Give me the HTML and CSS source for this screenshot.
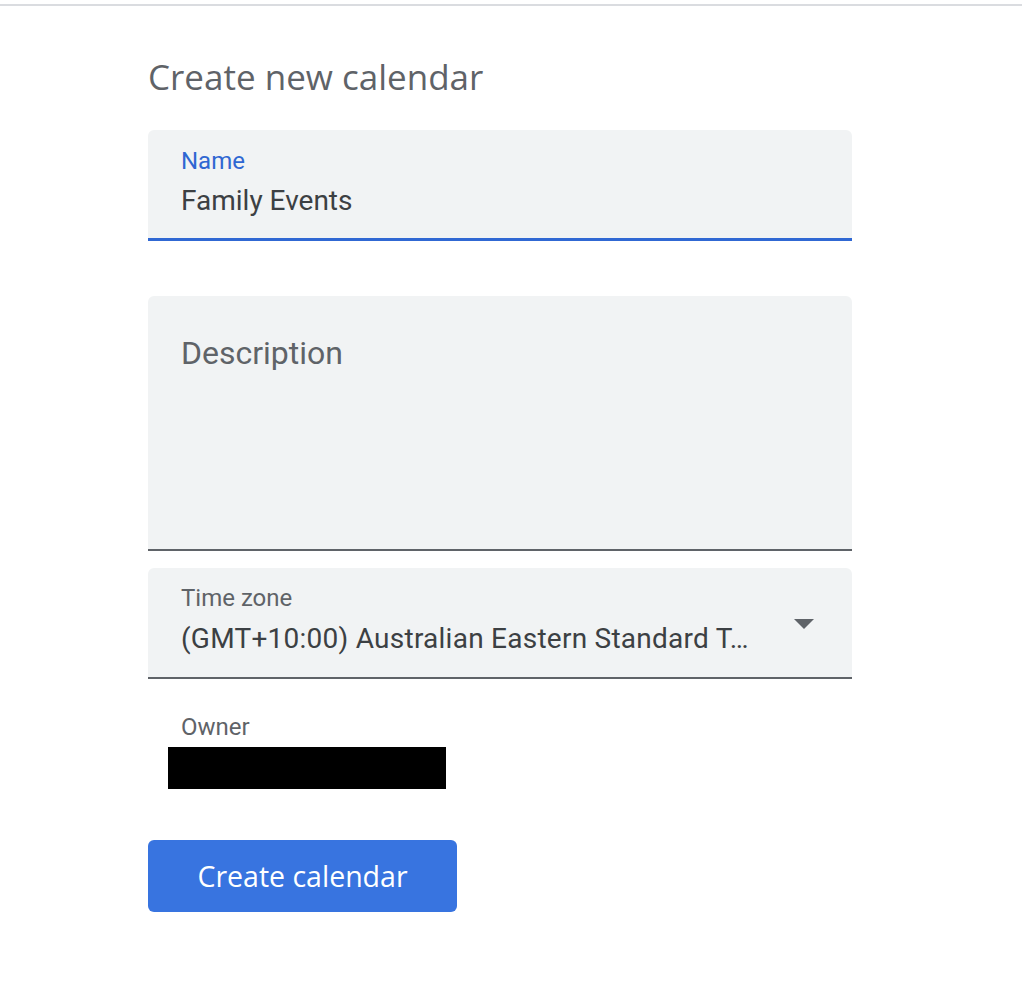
FILE: index.html
```html
<!DOCTYPE html>
<html lang="en">
<head>
<meta charset="utf-8">
<title>Create new calendar</title>
<link rel="stylesheet" href="styles.css">
</head>
<body>
<div class="topline"></div>
<main class="page">
  <h1 class="title">Create new calendar</h1>

  <div class="field field-name">
    <div class="label label-active">Name</div>
    <div class="value">Family Events</div>
  </div>

  <div class="field field-desc">
    <div class="placeholder">Description</div>
  </div>

  <div class="field field-tz">
    <div class="tz-text">
      <div class="label">Time zone</div>
      <div class="value value-tz">(GMT+10:00) Australian Eastern Standard T…</div>
    </div>
    <svg class="caret" width="20" height="10" viewBox="0 0 20 10"><path d="M0 0 L20 0 L10 10 Z" fill="#5f6368"/></svg>
  </div>

  <div class="owner">
    <div class="label">Owner</div>
    <div class="redacted"></div>
  </div>

  <button class="btn">Create calendar</button>
</main>
</body>
</html>
```

FILE: styles.css
```css
html, body {
  margin: 0;
  padding: 0;
  background: #ffffff;
}

body {
  font-family: Roboto, "Liberation Sans", sans-serif;
}

.topline {
  margin-top: 4px;
  height: 2px;
  background: #dadce0;
}

.page {
  width: 704px;
  padding-left: 148px;
  display: flex;
  flex-direction: column;
  align-items: flex-start;
}

.title {
  margin: 49px 0 0 0;
  font-family: "Open Sans", sans-serif;
  font-weight: 400;
  font-size: 35px;
  line-height: 44px;
  color: #5f6368;
  letter-spacing: 0;
}

.field {
  box-sizing: border-box;
  width: 704px;
  background: #f1f3f4;
  border-radius: 6px 6px 0 0;
  padding-left: 33px;
}

.field-name {
  margin-top: 31px;
  height: 111px;
  padding-top: 17px;
  border-bottom: 3px solid #3068d3;
}

.label {
  font-size: 24px;
  line-height: 28px;
  color: #5f6368;
}

.label-active {
  color: #2f67d2;
}

.value {
  margin-top: 10px;
  font-size: 28px;
  line-height: 32px;
  color: #3c4043;
  white-space: nowrap;
}

.field-desc {
  margin-top: 55px;
  height: 255px;
  padding-top: 38px;
  border-bottom: 2px solid #5f6368;
}

.placeholder {
  font-size: 32px;
  line-height: 38px;
  color: #5f6368;
}

.field-tz {
  margin-top: 17px;
  height: 111px;
  padding-top: 16px;
  padding-right: 38px;
  border-bottom: 2px solid #5f6368;
  display: flex;
  justify-content: space-between;
  align-items: flex-start;
}

.field-tz .value-tz {
  margin-top: 11px;
  letter-spacing: 0.25px;
}

.caret {
  display: block;
  margin-top: 35px;
}

.owner {
  margin-top: 34px;
  padding-left: 33px;
}

.redacted {
  margin-left: -13px;
  margin-top: 6px;
  width: 278px;
  height: 42px;
  background: #000000;
}

.btn {
  margin-top: 51px;
  width: 309px;
  height: 72px;
  border: none;
  border-radius: 6px;
  background: #3874e0;
  color: #ffffff;
  font-family: "Open Sans", sans-serif;
  font-size: 28.5px;
  font-weight: 500;
  padding: 0;
  cursor: pointer;
}
```
